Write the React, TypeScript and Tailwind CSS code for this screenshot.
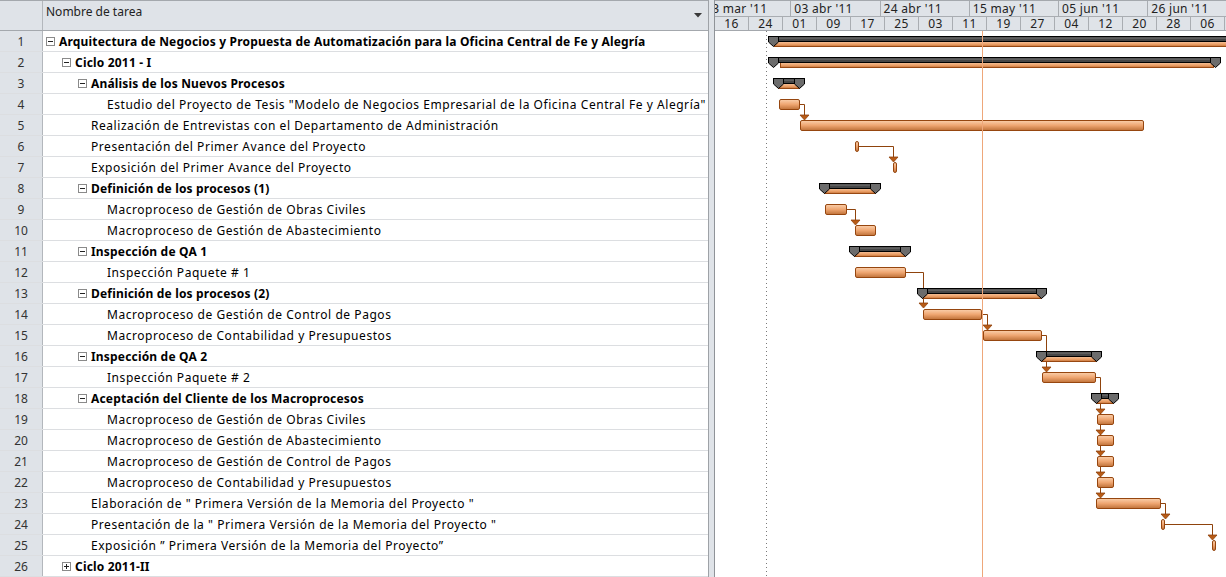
import React from 'react';

const GX = 716; // left edge of the gantt canvas on the page
const ROW_H = 21;

type Task = { name: string; level: number; summary?: boolean; collapsed?: boolean };

const tasks: Task[] = [
  { name: 'Arquitectura de Negocios y Propuesta de Automatización para la Oficina Central de Fe y Alegría', level: 0, summary: true },
  { name: 'Ciclo 2011 - I', level: 1, summary: true },
  { name: 'Análisis de los Nuevos Procesos', level: 2, summary: true },
  { name: 'Estudio del Proyecto de Tesis "Modelo de Negocios Empresarial de la Oficina Central Fe y Alegría"', level: 3 },
  { name: 'Realización de Entrevistas con el Departamento de Administración', level: 2 },
  { name: 'Presentación del Primer Avance del Proyecto', level: 2 },
  { name: 'Exposición del Primer Avance del Proyecto', level: 2 },
  { name: 'Definición de los procesos (1)', level: 2, summary: true },
  { name: 'Macroproceso de Gestión de Obras Civiles', level: 3 },
  { name: 'Macroproceso de Gestión de Abastecimiento', level: 3 },
  { name: 'Inspección de QA 1', level: 2, summary: true },
  { name: 'Inspección Paquete # 1', level: 3 },
  { name: 'Definición de los procesos (2)', level: 2, summary: true },
  { name: 'Macroproceso de Gestión de Control de Pagos', level: 3 },
  { name: 'Macroproceso de Contabilidad y Presupuestos', level: 3 },
  { name: 'Inspección de QA 2', level: 2, summary: true },
  { name: 'Inspección Paquete # 2', level: 3 },
  { name: 'Aceptación del Cliente de los Macroprocesos', level: 2, summary: true },
  { name: 'Macroproceso de Gestión de Obras Civiles', level: 3 },
  { name: 'Macroproceso de Gestión de Abastecimiento', level: 3 },
  { name: 'Macroproceso de Gestión de Control de Pagos', level: 3 },
  { name: 'Macroproceso de Contabilidad y Presupuestos', level: 3 },
  { name: 'Elaboración de " Primera Versión de la Memoria del Proyecto "', level: 2 },
  { name: 'Presentación de la " Primera Versión de la Memoria del Proyecto "', level: 2 },
  { name: 'Exposición ” Primera Versión de la Memoria del Proyecto”', level: 2 },
  { name: 'Ciclo 2011-II', level: 1, summary: true, collapsed: true },
];

const indent = ['pl-[3px]', 'pl-[19px]', 'pl-[35px]', 'pl-[51px]'];

// page x coordinates of the bars
const bars = [
  { row: 4, x1: 780, x2: 801 },
  { row: 5, x1: 801, x2: 1145 },
  { row: 6, x1: 856, x2: 860 },
  { row: 7, x1: 894, x2: 898 },
  { row: 9, x1: 826, x2: 848 },
  { row: 10, x1: 856, x2: 877 },
  { row: 12, x1: 856, x2: 907 },
  { row: 14, x1: 924, x2: 983 },
  { row: 15, x1: 984, x2: 1043 },
  { row: 17, x1: 1043, x2: 1097 },
  { row: 19, x1: 1098, x2: 1115 },
  { row: 20, x1: 1098, x2: 1115 },
  { row: 21, x1: 1098, x2: 1115 },
  { row: 22, x1: 1098, x2: 1115 },
  { row: 23, x1: 1097, x2: 1162 },
  { row: 24, x1: 1162, x2: 1166 },
  { row: 25, x1: 1213, x2: 1217 },
];

const summaries = [
  { row: 1, x1: 769, x2: 1240, inL: 6, inR: 6 },
  { row: 2, x1: 769, x2: 1222, inL: 12, inR: 7 },
  { row: 3, x1: 774, x2: 806, inL: 5, inR: 5 },
  { row: 8, x1: 820, x2: 882, inL: 5, inR: 5 },
  { row: 11, x1: 850, x2: 912, inL: 5, inR: 5 },
  { row: 13, x1: 918, x2: 1048, inL: 5, inR: 5 },
  { row: 16, x1: 1037, x2: 1103, inL: 5, inR: 5 },
  { row: 18, x1: 1092, x2: 1120, inL: 5, inR: 5 },
];

// links: from (x, y) right to vx, then down to ay where the arrow sits
const links = [
  { x: 801, y: 104, vx: 805, ay: 115 },
  { x: 860, y: 146, vx: 894, ay: 157 },
  { x: 848, y: 209, vx: 856, ay: 220 },
  { x: 907, y: 272, vx: 924, ay: 303 },
  { x: 983, y: 314, vx: 988, ay: 325 },
  { x: 1043, y: 335, vx: 1047, ay: 367 },
  { x: 1097, y: 377, vx: 1101, ay: 493 },
  { x: 1162, y: 503, vx: 1166, ay: 514 },
  { x: 1166, y: 524, vx: 1213, ay: 535 },
];
const extraArrows = [
  { vx: 1101, ay: 409 },
  { vx: 1101, ay: 430 },
  { vx: 1101, ay: 451 },
  { vx: 1101, ay: 472 },
];

const topTier = ["13 mar '11", "03 abr '11", "24 abr '11", "15 may '11", "05 jun '11", "26 jun '11"];
const bottomTier = ['16', '24', '01', '09', '17', '25', '03', '11', '19', '27', '04', '12', '20', '28', '06'];

function ExpandBox({ collapsed }: { collapsed?: boolean }) {
  return (
    <div className="relative mr-[4px] h-[9px] w-[9px] shrink-0 border border-[#8a8a8a] bg-white">
      <div className="absolute left-[1px] top-[3px] h-px w-[5px] bg-[#222]" />
      {collapsed && <div className="absolute left-[3px] top-[1px] h-[5px] w-px bg-[#222]" />}
    </div>
  );
}

function Arrow({ vx, ay }: { vx: number; ay: number }) {
  const x = vx - GX + 0.5;
  const y = ay - 31;
  return <polygon points={`${x - 4.5},${y} ${x + 4.5},${y} ${x},${y + 5}`} fill="#b85b16" stroke="#8f430c" strokeWidth="0.8" />;
}

function SummaryBar({ row, x1, x2, inL, inR }: { row: number; x1: number; x2: number; inL: number; inR: number }) {
  const w = x2 - x1;
  const id = `sg${row}`;
  return (
    <svg
      className="absolute"
      style={{ left: x1 - GX, top: (row - 1) * ROW_H + 5 }}
      width={w}
      height={12}
      viewBox={`0 0 ${w} 12`}
    >
      <defs>
        <linearGradient id={id} x1="0" y1="0" x2="0" y2="1">
          <stop offset="0" stopColor="#f7c49c" />
          <stop offset="0.6" stopColor="#e99c63" />
          <stop offset="1" stopColor="#c27238" />
        </linearGradient>
      </defs>
      <rect x={inL + 0.5} y={5.5} width={w - inL - inR - 1} height={5} fill={`url(#${id})`} stroke="#984812" strokeWidth="1" />
      <rect x={0.5} y={0.5} width={w - 1} height={5} fill="#464646" stroke="#000" strokeWidth="1" />
      <rect x={2} y={1.5} width={w - 4} height={1.2} fill="#6a6a6a" />
      <polygon points="0.5,0.5 10.5,0.5 10.5,6 5.5,10.5 0.5,6" fill="#6c6c6c" stroke="#000" strokeWidth="1" />
      <polygon
        points={`${w - 10.5},0.5 ${w - 0.5},0.5 ${w - 0.5},6 ${w - 5.5},10.5 ${w - 10.5},6`}
        fill="#6c6c6c"
        stroke="#000"
        strokeWidth="1"
      />
    </svg>
  );
}

export default function App() {
  return (
    <div className="flex h-[577px] w-[1226px] overflow-hidden bg-white font-['Noto_Sans',sans-serif] text-[12px] text-black">
      {/* Task table */}
      <div className="flex w-[709px] shrink-0 flex-col border-r border-[#9ea2a7]">
        <div className="flex h-[31px] shrink-0 border-t border-b border-[#a4a8ad] bg-[#dfe3e8]">
          <div className="w-[43px] shrink-0 border-r border-[#b3b7bc]" />
          <div className="flex flex-1 items-start justify-between pl-[3px] pr-[6px] pt-[2px] leading-[17px] text-[#222]">
            <span>Nombre de tarea</span>
            <svg width="8" height="5" viewBox="0 0 8 5" className="mt-[10px]">
              <polygon points="0,0 8,0 4,4.5" fill="#3a3a3a" />
            </svg>
          </div>
        </div>
        {tasks.map((t, i) => (
          <div key={i} className="flex h-[21px] shrink-0 border-b border-[#dcdee1]">
            <div className="w-[43px] shrink-0 border-r border-[#b3b7bc] bg-[#dfe3e8] pt-px text-center leading-[19px] text-[#333]">
              {i + 1}
            </div>
            <div className={`flex flex-1 items-center whitespace-nowrap pt-px ${indent[t.level]}`}>
              {t.summary ? (
                <>
                  <ExpandBox collapsed={t.collapsed} />
                  <span className="font-bold leading-[19px] tracking-[0.18px]">{t.name}</span>
                </>
              ) : (
                <span className="pl-[13px] leading-[19px] tracking-[0.55px]">{t.name}</span>
              )}
            </div>
          </div>
        ))}
      </div>

      {/* Splitter */}
      <div className="w-[6px] shrink-0 border-r border-[#8f9398] bg-[#dfe3e8]" />

      {/* Gantt */}
      <div className="flex flex-1 flex-col overflow-hidden">
        <div className="h-[31px] shrink-0 border-t border-b border-[#a4a8ad] bg-[#dfe3e8] text-[#222]">
          <div className="flex h-[16px] overflow-hidden border-b border-[#a9adb2]">
            <div className="-ml-[13px] flex">
              {topTier.map((l) => (
                <div key={l} className="w-[89.25px] shrink-0 whitespace-nowrap border-r border-[#a9adb2] pl-[3px] leading-[15px] tracking-[0.3px]">
                  {l}
                </div>
              ))}
            </div>
          </div>
          <div className="flex h-[13px]">
            {bottomTier.map((l, i) => (
              <div key={i} className="w-[34px] shrink-0 border-r border-[#a9adb2] text-center leading-[14px] tracking-[0.4px]">
                {l}
              </div>
            ))}
          </div>
        </div>

        <div className="relative flex-1">
          <svg className="absolute left-0 top-0" width="510" height="546" viewBox="0 0 510 546">
            <line x1="51.5" y1="0" x2="51.5" y2="546" stroke="#7a7a7a" strokeWidth="1" strokeDasharray="1 3" />
            {links.map((l, i) => (
              <g key={i}>
                <polyline
                  points={`${l.x - GX},${l.y - 31 + 0.5} ${l.vx - GX + 0.5},${l.y - 31 + 0.5} ${l.vx - GX + 0.5},${l.ay - 31}`}
                  fill="none"
                  stroke="#8f430c"
                  strokeWidth="1"
                />
                <Arrow vx={l.vx} ay={l.ay} />
              </g>
            ))}
            {extraArrows.map((a, i) => (
              <Arrow key={i} vx={a.vx} ay={a.ay} />
            ))}
          </svg>

          {summaries.map((s) => (
            <SummaryBar key={s.row} {...s} />
          ))}

          {bars.map((b, i) => (
            <div
              key={i}
              className="absolute h-[11px] rounded-[2px] border border-[#96460f] bg-linear-to-b from-[#f9cba5] via-[#eea570] to-[#c4773e]"
              style={{ left: b.x1 - GX, top: (b.row - 1) * ROW_H + 5, width: b.x2 - b.x1 }}
            />
          ))}

          <div className="absolute left-[267px] top-0 h-full w-px bg-[#eea77a]" />
        </div>
      </div>
    </div>
  );
}
